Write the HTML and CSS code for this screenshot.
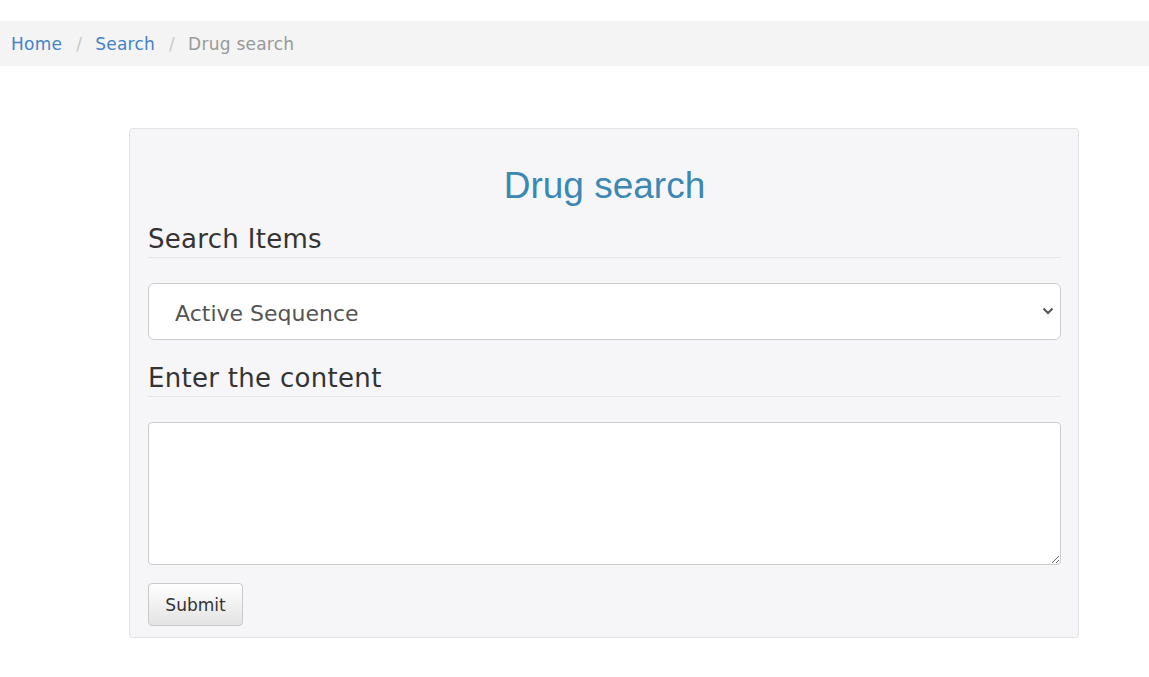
FILE: index.html
```html
<!DOCTYPE html>
<html lang="en">
<head>
<meta charset="utf-8">
<title>Drug search</title>
<link rel="stylesheet" href="styles.css">
</head>
<body>
<nav class="breadcrumb">
  <a href="#" class="crumb-link">Home</a>
  <span class="sep">/</span>
  <a href="#" class="crumb-link">Search</a>
  <span class="sep">/</span>
  <span class="crumb-active">Drug search</span>
</nav>
<main class="panel">
  <h1 class="title">Drug search</h1>
  <form class="search-form">
    <div class="legend">Search Items</div>
    <div class="select-wrap">
      <select class="select">
        <option>Active Sequence</option>
      </select>
      <svg class="chevron" width="12" height="8" viewBox="0 0 12 8" aria-hidden="true">
        <path d="M1.5 1.5 L6 6 L10.5 1.5" fill="none" stroke="#555" stroke-width="2"/>
      </svg>
    </div>
    <div class="legend legend-second">Enter the content</div>
    <textarea class="textarea"></textarea>
    <button type="button" class="btn">Submit</button>
  </form>
</main>
</body>
</html>
```
FILE: styles.css
```css
html, body {
  margin: 0;
  padding: 0;
  background: #fff;
}
body {
  padding-top: 21px;
  font-family: "DejaVu Sans", Verdana, sans-serif;
  color: #333;
}
.breadcrumb {
  display: flex;
  align-items: center;
  height: 45px;
  padding: 0 11px;
  background: #f4f4f4;
  font-size: 17px;
  letter-spacing: 0.25px;
}
.crumb-link {
  color: #4383c9;
  text-decoration: none;
}
.sep {
  color: #c8c8c8;
  margin: 0 13px 0 14px;
}
.crumb-active {
  color: #999;
}
.panel {
  box-sizing: border-box;
  width: 950px;
  margin: 62px 0 0 129px;
  padding: 18px 17px 11px 18px;
  background: #f6f6f8;
  border: 1px solid #e2e2e4;
  border-radius: 4px;
}
.title {
  margin: 19px 0 15px;
  font-family: "Liberation Sans", Arial, sans-serif;
  font-weight: normal;
  font-size: 37px;
  line-height: 40px;
  text-align: center;
  color: #3a88b4;
}
.search-form {
  display: flex;
  flex-direction: column;
  align-items: flex-start;
}
.legend {
  align-self: stretch;
  font-size: 26px;
  line-height: 36px;
  letter-spacing: 0.3px;
  color: #333;
  border-bottom: 1px solid #e5e5e5;
  margin-bottom: 25px;
}
.legend-second {
  margin-top: 20px;
}
.select-wrap {
  align-self: stretch;
  position: relative;
  display: flex;
}
.select {
  flex: 1;
  box-sizing: border-box;
  height: 57px;
  margin: 0;
  padding: 4px 40px 0 26px;
  appearance: none;
  -webkit-appearance: none;
  font-family: "DejaVu Sans", Verdana, sans-serif;
  font-size: 22px;
  color: #555;
  background: #fff;
  border: 1px solid #ccc;
  border-radius: 6px;
}
.chevron {
  position: absolute;
  right: 7px;
  top: 24px;
  pointer-events: none;
}
.textarea {
  align-self: stretch;
  box-sizing: border-box;
  height: 143px;
  margin: 0;
  padding: 8px 12px;
  font-family: "DejaVu Sans", Verdana, sans-serif;
  font-size: 16px;
  background: #fff;
  border: 1px solid #ccc;
  border-radius: 4px;
}
.btn {
  box-sizing: border-box;
  width: 95px;
  height: 43px;
  margin-top: 18px;
  padding: 0;
  font-family: "DejaVu Sans", Verdana, sans-serif;
  font-size: 17px;
  color: #333;
  background: linear-gradient(#ffffff, #e3e3e3);
  border: 1px solid #c9c9c9;
  border-radius: 4px;
}
```
